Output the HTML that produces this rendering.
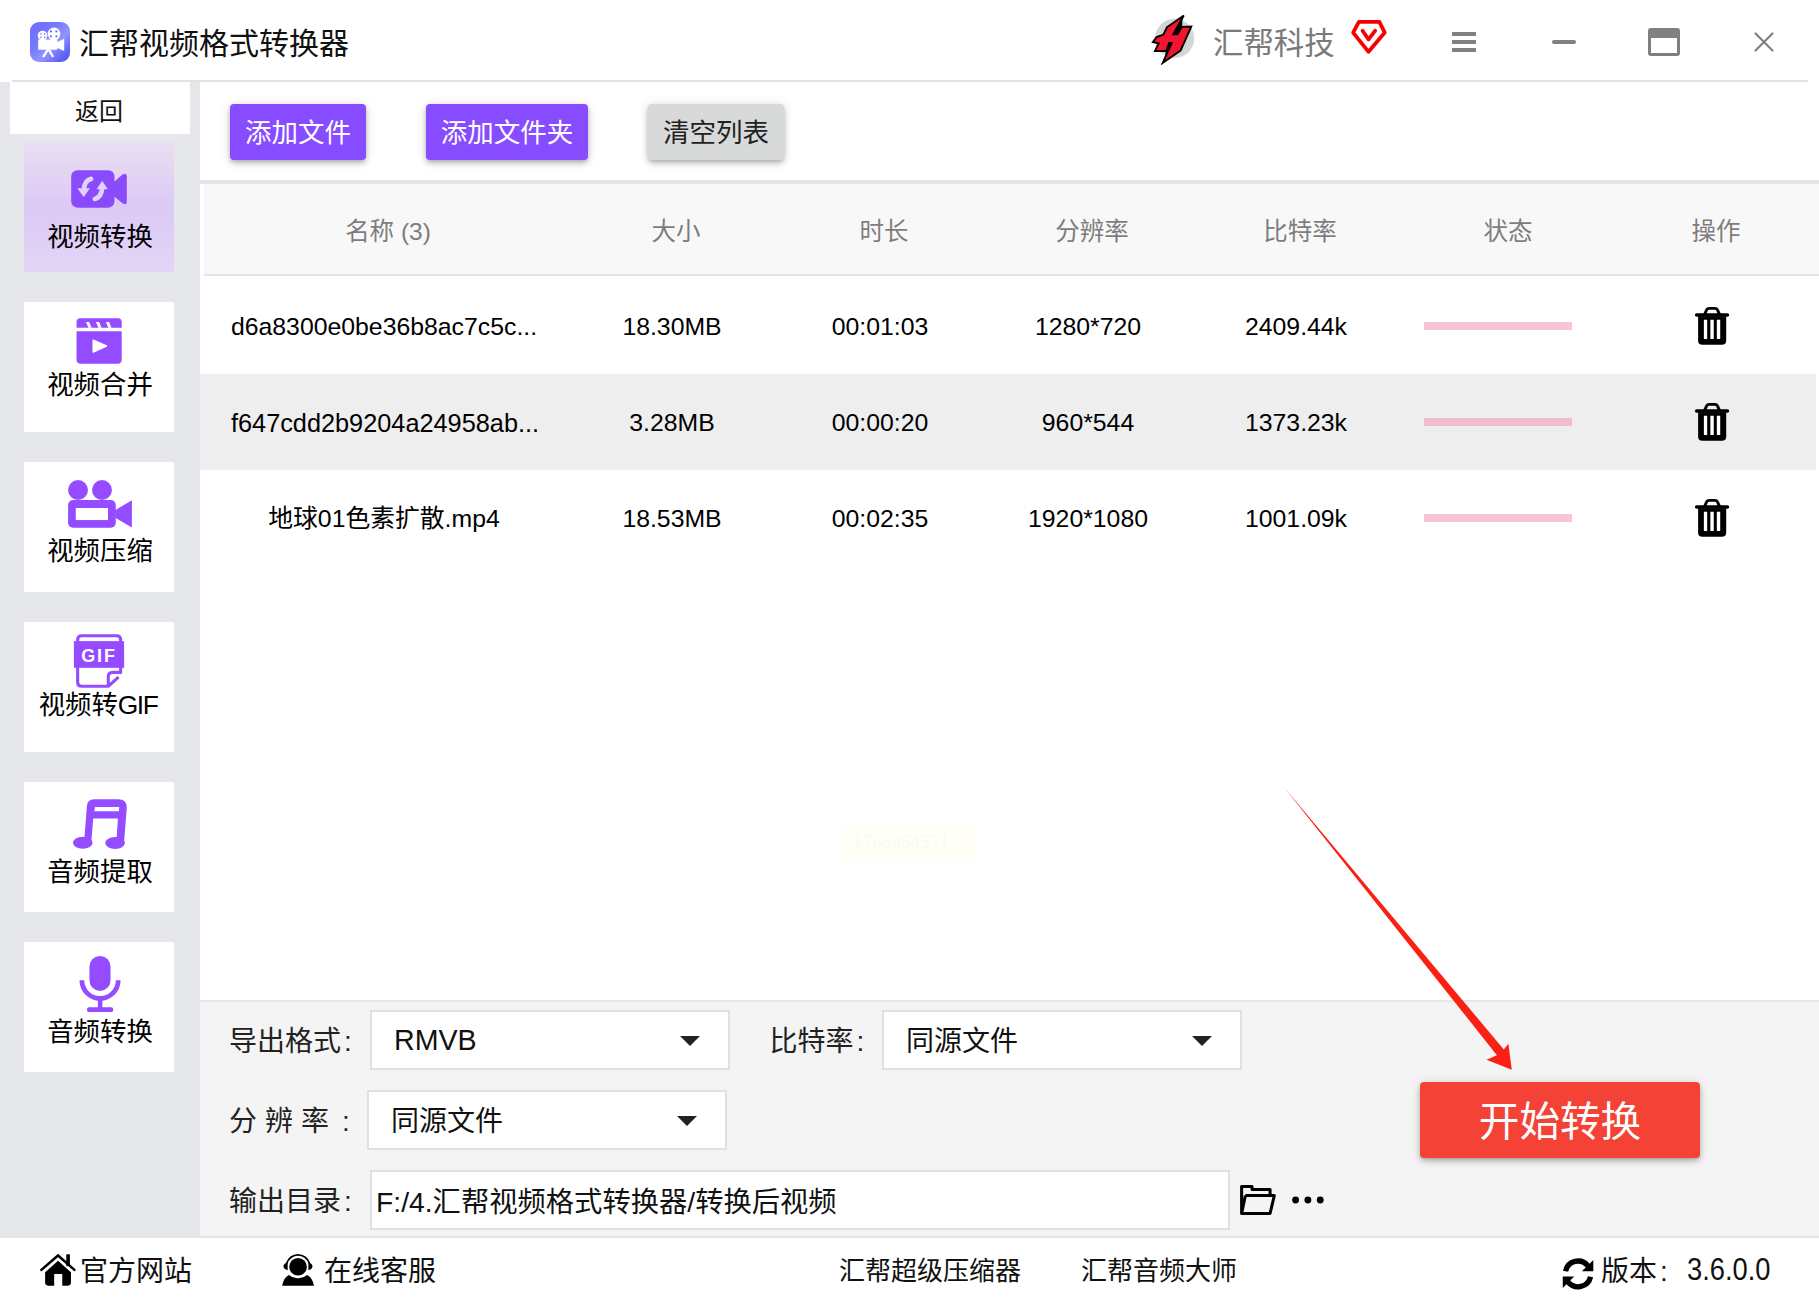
<!DOCTYPE html>
<html lang="zh-CN">
<head>
<meta charset="utf-8">
<title>汇帮视频格式转换器</title>
<style>
*{box-sizing:border-box;margin:0;padding:0}
html,body{width:1819px;height:1303px;overflow:hidden;background:#fff}
body{position:relative;font-family:"Liberation Sans","Noto Sans CJK SC",sans-serif;color:#000}
.abs{position:absolute}
.t{position:absolute;white-space:nowrap;line-height:1}
.c{transform:translateX(-50%)}
/* title bar */
#titlebar{left:0;top:0;width:1819px;height:80px;background:#fff}
#titleline{left:12px;top:80px;width:1796px;height:2px;background:#e2e2e2}
/* sidebar */
#sidebar{left:0;top:82px;width:200px;height:1155px;background:#e6e7eb}
#back{left:10px;top:82px;width:180px;height:52px;background:#fff}
.nav{position:absolute;left:24px;width:150px;height:130px;background:#fff}
.nav.active{background:linear-gradient(180deg,#e9dff2 0%,#e3d4f4 25%,#dcc9f6 50%,#dfcff6 75%,#e3d5f6 100%)}
.navt{position:absolute;left:1px;width:150px;text-align:center;font-size:26.4px;line-height:1;white-space:nowrap}
/* toolbar */
.btn{position:absolute;top:104px;height:56px;border-radius:4px;color:#fff;font-size:26.5px;text-align:center;line-height:58px;white-space:nowrap;box-shadow:0 2px 4px -1px rgba(0,0,0,.2),0 4px 6px 0 rgba(0,0,0,.14),0 1px 12px 0 rgba(0,0,0,.12)}
.purple{background:#874cff}
.gray{background:#d8d9d9;color:#222}
#sep1{left:200px;top:180px;width:1619px;height:4px;background:#e5e5e5}
/* table */
#thead{left:204px;top:184px;width:1615px;height:90px;background:#f8f8f8}
#theadline{left:204px;top:274px;width:1615px;height:2px;background:#e4e4e4}
.th{position:absolute;top:220px;font-size:24.5px;color:#7d7d7d;line-height:1;white-space:nowrap;transform:translateX(-50%)}
.row{position:absolute;left:200px;width:1616px;height:96px}
.td{position:absolute;font-size:24.8px;line-height:1;white-space:nowrap;transform:translateX(-50%)}
.bar{position:absolute;left:1424px;width:148px;height:8px;background:#f8c5d8}
/* bottom */
#bottom{left:200px;top:1000px;width:1619px;height:237px;background:#f4f4f4}
#bottomline{left:200px;top:1000px;width:1619px;height:2px;background:#e6e6e6}
#footline{left:0;top:1236px;width:1819px;height:2px;background:#e6e6e6}
#footer{left:0;top:1238px;width:1819px;height:65px;background:#fff}
.lbl{position:absolute;font-size:28px;line-height:1;white-space:nowrap;color:#222}
.col{margin-left:3px}
.sel{position:absolute;height:60px;background:#fff;border:2px solid #dfe0e2}
.selt{position:absolute;font-size:28px;line-height:1;white-space:nowrap;color:#111}
.caret{position:absolute;width:0;height:0;border-left:10px solid transparent;border-right:10px solid transparent;border-top:10px solid #222}
#start{left:1420px;top:1082px;width:280px;height:76px;background:#f44236;border-radius:4px;color:#fff;font-size:40.6px;line-height:80px;text-align:center;box-shadow:0 2px 4px -1px rgba(0,0,0,.2),0 4px 6px 0 rgba(0,0,0,.14),0 1px 12px 0 rgba(0,0,0,.12)}
.ft{position:absolute;font-size:28px;line-height:1;white-space:nowrap;color:#111}
</style>
</head>
<body>
<!-- TITLE BAR -->
<div class="abs" id="titlebar"></div>
<div class="abs" id="titleline"></div>
<div class="abs" style="left:30px;top:22px;width:40px;height:40px;border-radius:9px;background:linear-gradient(135deg,#6e6ffb 0%,#7577fc 35%,#9393ff 60%,#6a6af6 80%,#5252ec 100%)"></div><svg class="abs" style="left:20px;top:10px" width="60" height="60" viewBox="0 0 1303 1303" ><g fill="#fff"><circle cx="490" cy="555" r="105"/><circle cx="738" cy="520" r="138"/><rect x="395" y="640" width="415" height="222"/><polygon points="800,700 960,625 960,890 800,820"/><polygon points="575,860 655,860 740,1010 700,1030 615,890 525,1030 480,1010"/></g><g fill="#6a6cf4"><circle cx="455" cy="520" r="17"/><circle cx="535" cy="520" r="17"/><circle cx="455" cy="592" r="17"/><circle cx="535" cy="592" r="17"/><circle cx="672" cy="465" r="24"/><circle cx="790" cy="465" r="24"/><circle cx="672" cy="572" r="24"/><circle cx="790" cy="572" r="24"/></g></svg>
<div class="t" style="left:79px;top:29px;font-size:30px;color:#111">汇帮视频格式转换器</div>
<svg class="abs" style="left:1140px;top:5px" width="70" height="70" viewBox="0 0 1303 1303" ><circle cx="645" cy="620" r="365" fill="#d3d7d5"/><polygon points="815,195 620,545 700,545 775,410 955,402 755,850 425,1075 590,705 545,705 490,855 280,855 345,715 240,690 308,595 435,550 500,415" fill="#f3142f" stroke="#000" stroke-width="36" stroke-linejoin="miter"/><polygon points="790,225 605,550 705,550 785,395" fill="#000"/><polygon points="540,700 595,700 470,975 480,860" fill="#000"/></svg>
<svg class="abs" style="left:1340px;top:10px" width="60" height="60" viewBox="0 0 1303 1303" ><g fill="none" stroke="#f80000" stroke-width="82" stroke-linejoin="round" stroke-linecap="round"><polygon points="410,256 855,256 972,490 620,908 285,490"/><polyline points="490,450 620,640 765,450"/></g></svg>
<div class="t" style="left:1213px;top:28px;font-size:30.4px;color:#7a7a7a">汇帮科技</div>
<div class="abs" style="left:1452px;top:32px;width:24px;height:4px;background:#808080"></div><div class="abs" style="left:1452px;top:40px;width:24px;height:4px;background:#808080"></div><div class="abs" style="left:1452px;top:48px;width:24px;height:4px;background:#808080"></div><div class="abs" style="left:1552px;top:40px;width:24px;height:4px;border-radius:2px;background:#808080"></div><div class="abs" style="left:1648px;top:28px;width:32px;height:28px;border:3px solid #808080;border-top-width:10px;border-radius:3px"></div><svg class="abs" style="left:1750px;top:28px" width="28" height="28" viewBox="0 0 28 28" ><path d="M5.5 5.5 L22.5 22.5 M22.5 5.5 L5.5 22.5" stroke="#808080" stroke-width="2.2" stroke-linecap="round" fill="none"/></svg>

<!-- SIDEBAR -->
<div class="abs" id="sidebar"></div>
<div class="abs" id="back"></div>
<div class="t" style="left:75px;top:100px;font-size:24px;color:#111">返回</div>

<div class="nav active" style="top:142px"><svg class="abs" style="left:30px;top:13px" width="90" height="70" viewBox="0 0 1675 1303" ><rect x="320" y="285" width="805" height="695" rx="115" fill="#8a4bfd"/><path d="M1110 505 L1275 365 Q1355 320 1355 400 L1355 865 Q1355 945 1275 900 L1110 765 Z" fill="#8a4bfd"/><path d="M690 445 Q570 470 555 640" fill="none" stroke="#e2d2f7" stroke-width="88" stroke-linecap="round"/><polygon points="445,625 660,625 552,775" fill="#e2d2f7" stroke="#e2d2f7" stroke-width="10" stroke-linejoin="round"/><path d="M760 818 Q880 790 895 625" fill="none" stroke="#e2d2f7" stroke-width="88" stroke-linecap="round"/><polygon points="800,632 995,632 897,490" fill="#e2d2f7" stroke="#e2d2f7" stroke-width="10" stroke-linejoin="round"/></svg>
<div class="navt" style="top:82px">视频转换</div></div>
<div class="nav" style="top:302px"><svg class="abs" style="left:30px;top:3px" width="90" height="70" viewBox="0 0 1675 1303" ><path d="M420 425 L420 315 Q420 245 490 245 L1190 245 Q1260 245 1260 315 L1260 425 Z" fill="#954bff"/><path d="M420 490 L1260 490 L1260 1015 Q1260 1095 1180 1095 L500 1095 Q420 1095 420 1015 Z" fill="#954bff"/><g fill="#fff"><polygon points="595,318 655,318 700,425 640,425"/><polygon points="780,318 840,318 885,425 825,425"/><polygon points="965,318 1025,318 1070,425 1010,425"/><polygon points="730,655 975,762 730,875" stroke="#fff" stroke-width="30" stroke-linejoin="round"/></g></svg>
<div class="navt" style="top:70px">视频合并</div></div>
<div class="nav" style="top:462px"><svg class="abs" style="left:30px;top:3px" width="90" height="70" viewBox="0 0 1675 1303" ><g fill="#954bff"><circle cx="447" cy="465" r="185"/><circle cx="893" cy="465" r="185"/><rect x="262" y="650" width="888" height="520" rx="95"/><polygon points="1140,840 1450,655 1450,1165 1140,980"/></g><rect x="405" y="800" width="600" height="225" fill="#fff"/></svg>
<div class="navt" style="top:76px">视频压缩</div></div>
<div class="nav" style="top:622px"><svg class="abs" style="left:30px;top:3px" width="90" height="70" viewBox="0 0 1675 1303" ><path d="M440 320 L440 275 Q440 200 515 200 L1165 200 Q1240 200 1240 275 L1240 320" fill="none" stroke="#954bff" stroke-width="58"/><rect x="370" y="300" width="935" height="497" fill="#954bff"/><path d="M440 780 L440 1065 Q440 1140 515 1140 L1010 1140 L1185 985 M1240 780 L1240 882 L1095 882 Q1010 882 1010 965 L1010 1140" fill="none" stroke="#954bff" stroke-width="58" stroke-linecap="round" stroke-linejoin="round"/><text x="838" y="680" text-anchor="middle" font-family="'Liberation Sans',sans-serif" font-weight="bold" font-size="335" letter-spacing="35" fill="#fff">GIF</text></svg>
<div class="navt" style="top:70px;left:-1px">视频转<span style="letter-spacing:-1.5px">GIF</span></div></div>
<div class="nav" style="top:782px"><svg class="abs" style="left:30px;top:3px" width="90" height="70" viewBox="0 0 1675 1303" ><g fill="#954bff"><path d="M560 1075 L612 390 Q622 265 745 265 L1195 265 Q1362 265 1355 425 L1302 1085 L1158 1085 L1190 625 L730 625 L692 1075 Z"/><ellipse cx="535" cy="1075" rx="183" ry="112"/><ellipse cx="1137" cy="1080" rx="183" ry="112"/></g><polygon points="762,410 1215,410 1207,490 752,490" fill="#fff"/></svg>
<div class="navt" style="top:76.6px">音频提取</div></div>
<div class="nav" style="top:942px"><svg class="abs" style="left:30px;top:3px" width="90" height="70" viewBox="0 0 1675 1303" ><rect x="660" y="205" width="392" height="650" rx="196" fill="#954bff"/><path d="M518 655 A339 339 0 0 0 1196 655" fill="none" stroke="#954bff" stroke-width="88"/><rect x="816" y="985" width="84" height="200" fill="#954bff"/><rect x="615" y="1160" width="486" height="86" rx="32" fill="#954bff"/></svg>
<div class="navt" style="top:76.6px">音频转换</div></div>

<!-- TOOLBAR -->
<div class="btn purple" style="left:230px;width:136px">添加文件</div>
<div class="btn purple" style="left:426px;width:162px">添加文件夹</div>
<div class="btn gray" style="left:648px;width:136px">清空列表</div>
<div class="abs" id="sep1"></div>

<!-- TABLE -->
<div class="abs" id="thead"></div>
<div class="abs" id="theadline"></div>
<div class="th" style="left:388px">名称 (3)</div>
<div class="th" style="left:676px">大小</div>
<div class="th" style="left:884px">时长</div>
<div class="th" style="left:1092px">分辨率</div>
<div class="th" style="left:1300px">比特率</div>
<div class="th" style="left:1508px">状态</div>
<div class="th" style="left:1716px">操作</div>

<div class="row" style="top:278px;background:#fff"></div>
<div class="row" style="top:374px;background:#eeeeee"></div>
<div class="row" style="top:470px;background:#fff"></div>

<div class="td" style="left:384px;top:315px">d6a8300e0be36b8ac7c5c...</div>
<div class="td" style="left:672px;top:315px">18.30MB</div>
<div class="td" style="left:880px;top:315px">00:01:03</div>
<div class="td" style="left:1088px;top:315px">1280*720</div>
<div class="td" style="left:1296px;top:315px">2409.44k</div>
<div class="bar" style="top:322px"></div>

<div class="td" style="left:385px;top:411px;font-size:25.3px">f647cdd2b9204a24958ab...</div>
<div class="td" style="left:672px;top:411px">3.28MB</div>
<div class="td" style="left:880px;top:411px">00:00:20</div>
<div class="td" style="left:1088px;top:411px">960*544</div>
<div class="td" style="left:1296px;top:411px">1373.23k</div>
<div class="bar" style="top:418px;background:#f0bdd0"></div>

<div class="td" style="left:384px;top:507px">地球01色素扩散.mp4</div>
<div class="td" style="left:672px;top:507px">18.53MB</div>
<div class="td" style="left:880px;top:507px">00:02:35</div>
<div class="td" style="left:1088px;top:507px">1920*1080</div>
<div class="td" style="left:1296px;top:507px">1001.09k</div>
<div class="bar" style="top:514px"></div>
<svg class="abs" style="left:1682px;top:296px" width="60" height="60" viewBox="0 0 1303 1303" ><rect x="280" y="375" width="745" height="76" rx="38" fill="#000"/><path d="M490 400 L535 302 Q550 270 590 270 L715 270 Q755 270 770 302 L815 400" fill="none" stroke="#000" stroke-width="62"/><path d="M350 440 L960 440 L960 965 Q960 1060 865 1060 L445 1060 Q350 1060 350 965 Z" fill="#000"/><g fill="#fff"><rect x="475" y="515" width="72" height="420" rx="8"/><rect x="616" y="515" width="74" height="420" rx="8"/><rect x="756" y="515" width="74" height="420" rx="8"/></g></svg><svg class="abs" style="left:1682px;top:392px" width="60" height="60" viewBox="0 0 1303 1303" ><rect x="280" y="375" width="745" height="76" rx="38" fill="#000"/><path d="M490 400 L535 302 Q550 270 590 270 L715 270 Q755 270 770 302 L815 400" fill="none" stroke="#000" stroke-width="62"/><path d="M350 440 L960 440 L960 965 Q960 1060 865 1060 L445 1060 Q350 1060 350 965 Z" fill="#000"/><g fill="#fff"><rect x="475" y="515" width="72" height="420" rx="8"/><rect x="616" y="515" width="74" height="420" rx="8"/><rect x="756" y="515" width="74" height="420" rx="8"/></g></svg><svg class="abs" style="left:1682px;top:488px" width="60" height="60" viewBox="0 0 1303 1303" ><rect x="280" y="375" width="745" height="76" rx="38" fill="#000"/><path d="M490 400 L535 302 Q550 270 590 270 L715 270 Q755 270 770 302 L815 400" fill="none" stroke="#000" stroke-width="62"/><path d="M350 440 L960 440 L960 965 Q960 1060 865 1060 L445 1060 Q350 1060 350 965 Z" fill="#000"/><g fill="#fff"><rect x="475" y="515" width="72" height="420" rx="8"/><rect x="616" y="515" width="74" height="420" rx="8"/><rect x="756" y="515" width="74" height="420" rx="8"/></g></svg>

<!-- watermark -->
<div class="abs" style="left:841px;top:824px;width:137px;height:36px;background:#fffff8"></div>
<div class="t" style="left:853px;top:833px;font-size:18.5px;font-family:'Liberation Serif',serif;color:#fafaf4;letter-spacing:.4px">1765954571</div>

<!-- BOTTOM PANEL -->
<div class="abs" id="bottom"></div>
<div class="abs" id="bottomline"></div>
<div class="lbl" style="left:229px;top:1028px">导出格式<span class="col">:</span></div>
<div class="sel" style="left:370px;top:1010px;width:360px"></div>
<div class="selt" style="left:394px;top:1026px;font-size:28.6px">RMVB</div>
<div class="caret" style="left:680px;top:1036px"></div>

<div class="lbl" style="left:769.5px;top:1028px">比特率<span class="col">:</span></div>
<div class="sel" style="left:882px;top:1010px;width:360px"></div>
<div class="selt" style="left:906px;top:1028px">同源文件</div>
<div class="caret" style="left:1192px;top:1036px"></div>

<div class="lbl" style="left:229px;top:1108px;letter-spacing:8px">分辨率<span style="margin-left:5px">:</span></div>
<div class="sel" style="left:367px;top:1090px;width:360px"></div>
<div class="selt" style="left:391px;top:1108px">同源文件</div>
<div class="caret" style="left:677px;top:1116px"></div>

<div class="lbl" style="left:229px;top:1188px">输出目录<span class="col">:</span></div>
<div class="sel" style="left:370px;top:1170px;width:860px"></div>
<div class="selt" style="left:376px;top:1188px;font-size:28.3px">F:/4.汇帮视频格式转换器/转换后视频</div>
<svg class="abs" style="left:1230px;top:1170px" width="110" height="60" viewBox="0 0 1819 992" ><path d="M192 718 L192 272 L365 272 L365 322 L663 322 L663 420 M255 422 L733 422 L663 718 L192 718 L255 422" fill="none" stroke="#000" stroke-width="50" stroke-linejoin="round"/><circle cx="1085" cy="495" r="57"/><circle cx="1288" cy="495" r="57"/><circle cx="1492" cy="495" r="57"/></svg>

<div class="abs" id="start">开始转换</div>
<svg class="abs" style="left:1270px;top:780px" width="260" height="300" viewBox="0 0 260 300" ><polygon points="13.8,6.9 233.8,269.5 238.4,263.7 241.8,289.7 216.5,279.8 226.9,275.2" fill="#fa2014"/></svg>

<!-- FOOTER -->
<div class="abs" id="footline"></div>
<div class="abs" id="footer"></div>
<svg class="abs" style="left:30px;top:1240px" width="100" height="60" viewBox="0 0 1819 1091" ><polyline points="207,543 510,282 808,543" fill="none" stroke="#000" stroke-width="46" stroke-linecap="round" stroke-linejoin="miter"/><rect x="660" y="260" width="66" height="215"/><path d="M275 588 L510 375 L745 588 L745 775 Q745 830 690 830 L587 830 L587 620 L440 620 L440 830 L330 830 Q275 830 275 775 Z"/></svg><svg class="abs" style="left:270px;top:1240px" width="100" height="60" viewBox="0 0 1819 1091" ><circle cx="510" cy="485" r="160"/><path d="M305 425 A213 213 0 0 1 715 425" fill="none" stroke="#000" stroke-width="34"/><path d="M322 408 L322 548 Q245 530 245 478 Q245 425 322 408 Z"/><path d="M698 408 L698 548 Q772 530 772 478 Q772 425 698 408 Z"/><path d="M222 832 Q240 690 345 635 Q420 700 510 695 Q600 700 675 635 Q780 690 800 832 Z"/></svg><svg class="abs" style="left:1550px;top:1240px" width="100" height="60" viewBox="0 0 1819 1091" ><path d="M283 568 A232 232 0 0 1 690 470" fill="none" stroke="#000" stroke-width="98"/><polygon points="788,362 788,570 580,570"/><path d="M737 668 A232 232 0 0 1 330 765" fill="none" stroke="#000" stroke-width="98"/><polygon points="232,872 232,664 440,664"/></svg>
<div class="ft" style="left:80px;top:1258px">官方网站</div>
<div class="ft" style="left:324px;top:1258px">在线客服</div>
<div class="ft" style="left:839px;top:1258px;font-size:26px">汇帮超级压缩器</div>
<div class="ft" style="left:1081px;top:1258px;font-size:26px">汇帮音频大师</div>
<div class="ft" style="left:1601px;top:1258px">版本<span class="col">:</span></div>
<div class="ft" style="left:1687px;top:1257px;transform:scale(.975,1.09);transform-origin:0 82%">3.6.0.0</div>
</body>
</html>
